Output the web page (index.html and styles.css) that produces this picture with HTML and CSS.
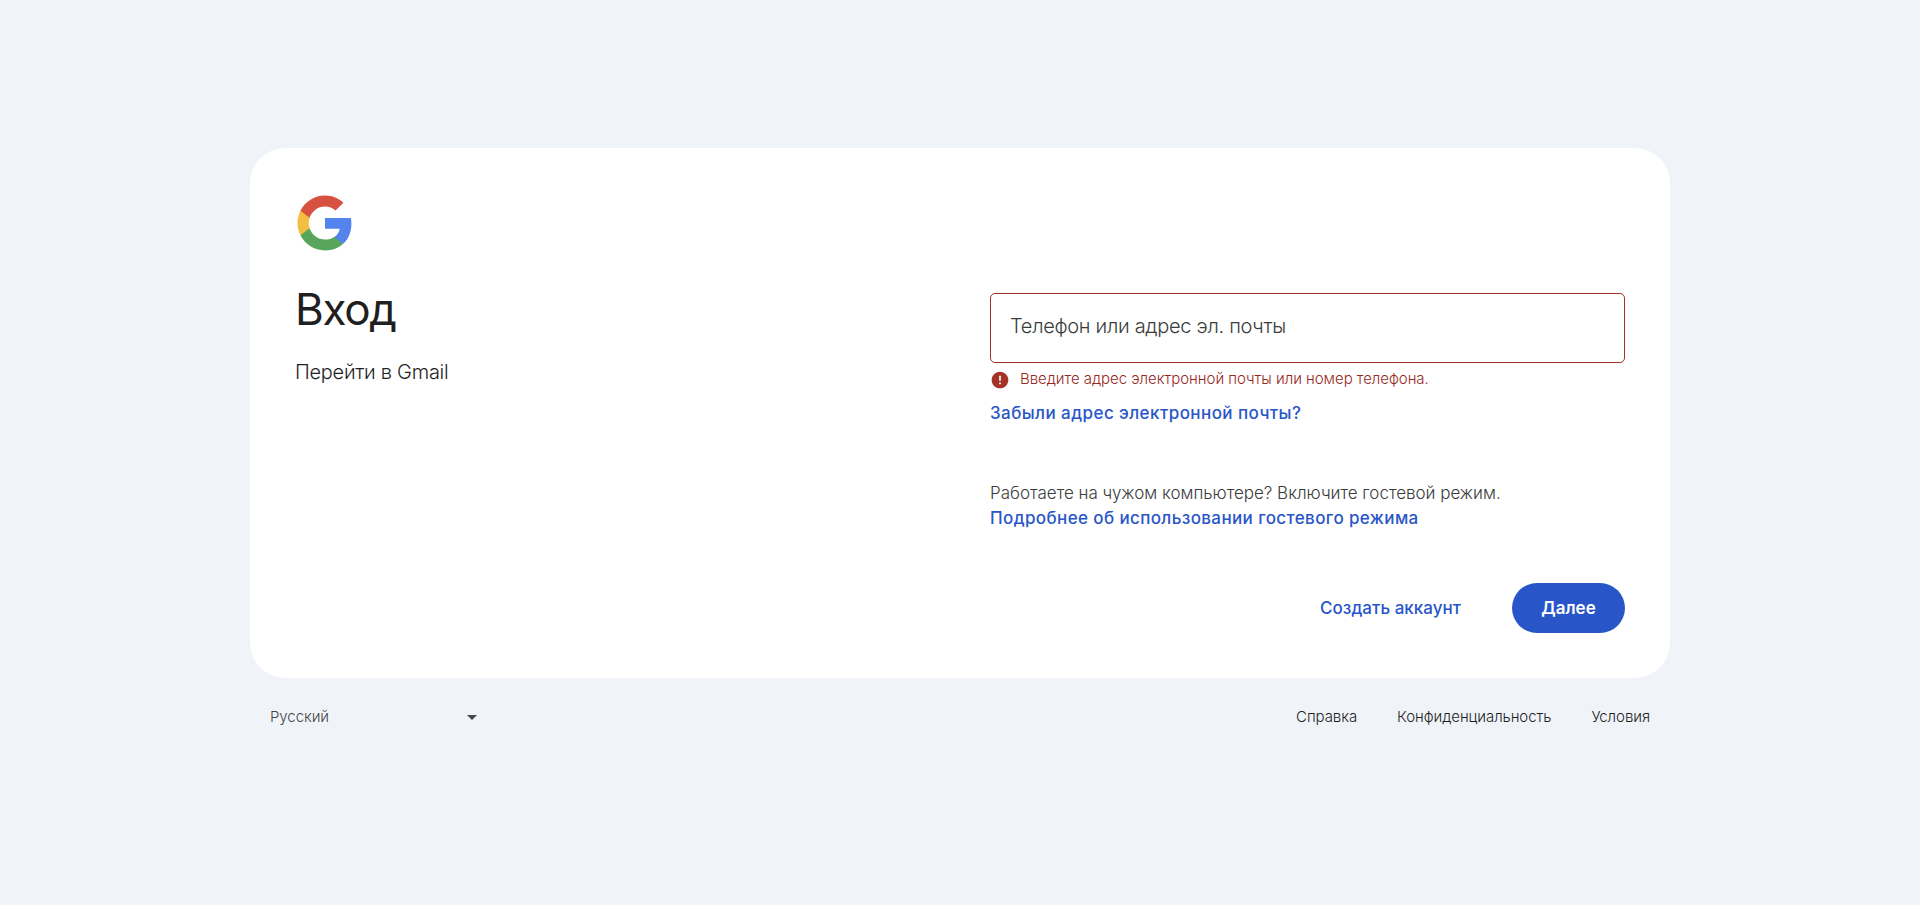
FILE: index.html
```html
<!DOCTYPE html>
<html lang="ru">
<head>
<meta charset="utf-8">
<title>Вход</title>
<link rel="stylesheet" href="styles.css">
</head>
<body>
<div class="page">
  <main class="card">
    <svg class="logo" viewBox="0 0 24 24" aria-hidden="true">
      <path fill="#5384ee" d="M22.56 12.25c0-.78-.07-1.53-.2-2.25H12v4.26h5.92c-.26 1.37-1.04 2.53-2.21 3.31v2.77h3.57c2.08-1.92 3.28-4.74 3.28-8.09z"/>
      <path fill="#58a55c" d="M12 23c2.97 0 5.46-.98 7.28-2.66l-3.57-2.77c-.98.66-2.23 1.06-3.71 1.06-2.86 0-5.29-1.93-6.16-4.53H2.18v2.84C3.99 20.53 7.7 23 12 23z"/>
      <path fill="#f1be42" d="M5.84 14.09c-.22-.66-.35-1.36-.35-2.09s.13-1.43.35-2.09V7.07H2.18C1.43 8.55 1 10.22 1 12s.43 3.45 1.18 4.93l2.85-2.22.81-.62z"/>
      <path fill="#d85140" d="M12 5.38c1.62 0 3.06.56 4.21 1.64l3.15-3.15C17.45 2.09 14.97 1 12 1 7.7 1 3.99 3.47 2.18 7.07l3.66 2.84c.87-2.6 3.3-4.53 6.16-4.53z"/>
    </svg>
    <div class="columns">
      <section class="intro">
        <h1 class="title">Вход</h1>
        <p class="subtitle">Перейти в Gmail</p>
      </section>
      <form class="form">
        <div class="field"><span class="label">Телефон или адрес эл. почты</span></div>
        <div class="error">
          <svg class="error-icon" viewBox="0 0 24 24" aria-hidden="true"><path fill="#a53227" d="M12 2C6.48 2 2 6.48 2 12s4.48 10 10 10 10-4.48 10-10S17.52 2 12 2zm1 15h-2v-2h2v2zm0-4h-2V7h2v6z"/></svg>
          <span class="error-text">Введите адрес электронной почты или номер телефона.</span>
        </div>
        <a class="link forgot">Забыли адрес электронной почты?</a>
        <div class="guest">
          <span class="guest-text">Работаете на чужом компьютере? Включите гостевой режим.</span>
          <a class="link guest-link">Подробнее об использовании гостевого режима</a>
        </div>
      </form>
    </div>
    <div class="actions">
      <a class="create">Создать аккаунт</a>
      <button class="next" type="button">Далее</button>
    </div>
  </main>
  <footer class="footer">
    <div class="language"><span class="lang-name">Русский</span><svg class="arrow" viewBox="0 0 10 5" aria-hidden="true"><path fill="#444746" d="M0 0h10L5 5z"/></svg></div>
    <nav class="links"><a class="help">Справка</a><a class="privacy">Конфиденциальность</a><a class="terms">Условия</a></nav>
  </footer>
</div>
</body>
</html>
```
FILE: styles.css
```css
* { box-sizing: border-box; }
html { background: #f0f4f9; }
body { margin: 0; font-family: Inter, "Open Sans", sans-serif; font-weight: 300; color: #1f1f1f; }
.page { width: 1420px; height: 905px; margin: 0 auto; padding-top: 148px; }
.card { display: flex; flex-direction: column; height: 530px; padding: 45px; border-radius: 35px; background: #fff; }
.logo { display: block; width: 60px; height: 60px; }
.columns { display: flex; flex: 1; white-space: nowrap; }
.intro { width: 695px; padding-top: 29px; }
.title { margin: 0; font-size: 44px; line-height: 55px; font-weight: 400; letter-spacing: -1.3px; }
.subtitle { margin: 20px 0 0; font-size: 20px; line-height: 30px; letter-spacing: -0.28px; }
.form { width: 635px; padding-top: 40px; }
.field { display: flex; align-items: center; height: 70px; padding: 0 19px 4px; border: 1px solid #a53227; border-radius: 5px; }
.label { font-size: 20px; color: #3a3d3c; letter-spacing: -0.3px; }
.error { display: flex; align-items: center; gap: 10px; height: 20px; margin-top: 6px; color: #98281e; font-size: 15px; letter-spacing: -0.04px; }
.error-icon { width: 20px; height: 20px; margin-top: 2px; }
.error-text { padding-bottom: 2px; }
.link { display: block; width: max-content; color: #2856c9; font-size: 17px; font-weight: 500; line-height: 25px; }
.forgot { margin-top: 12px; letter-spacing: 0.43px; }
.guest { margin-top: 55px; }
.guest-text { display: block; width: max-content; font-size: 17px; line-height: 25px; color: #3a3d3c; letter-spacing: -0.02px; }
.guest-link { letter-spacing: 0.38px; }
.actions { display: flex; justify-content: flex-end; align-items: center; gap: 51px; height: 50px; }
.create { color: #2856c9; font-size: 17px; font-weight: 500; letter-spacing: 0.03px; }
.next { width: 113px; height: 50px; padding: 0; border: 0; border-radius: 25px; background: #2856c9; color: #fff; font: 600 17px Inter, sans-serif; }
.footer { display: flex; justify-content: space-between; padding: 29px 20px 0; font-size: 15px; line-height: 20px; letter-spacing: -0.07px; }
.language { display: flex; justify-content: space-between; align-items: center; width: 207px; color: #444746; }
.arrow { width: 10px; height: 5px; margin-top: 1px; }
.links { display: flex; gap: 40px; }
```
